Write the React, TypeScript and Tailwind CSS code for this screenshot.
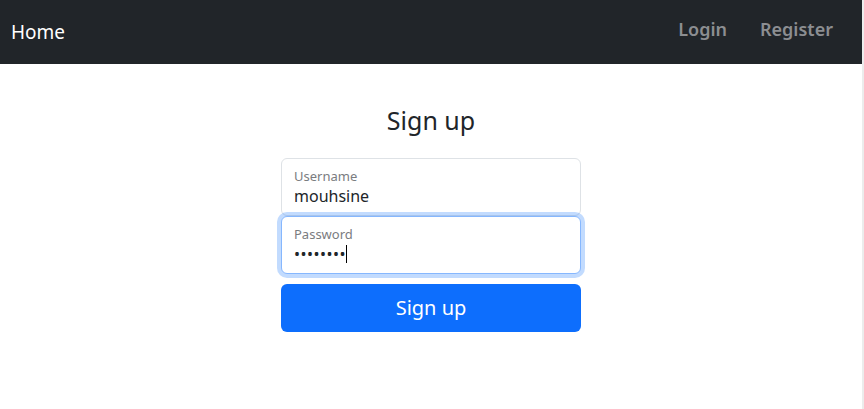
import { useState } from "react"

const font = { fontFamily: '"Noto Sans", "Open Sans", sans-serif' }

function Navbar() {
  return (
    <nav className="flex h-16 items-stretch justify-between bg-[#212529] pl-[11px] pr-[29px]">
      <a className="flex items-center pt-[1px] text-[19px] text-white">Home</a>
      <div className="flex items-center gap-[33px] pb-[6px] text-[18px] font-semibold text-[#8c8e91]">
        <a>Login</a>
        <a>Register</a>
      </div>
    </nav>
  )
}

function FloatingInput({
  label,
  value,
  focused,
  type = "text",
}: {
  label: string
  value: string
  focused?: boolean
  type?: string
}) {
  return (
    <div
      className={
        focused
          ? "relative h-[58px] rounded-[6px] border border-[#86b7fe] bg-white shadow-[0_0_0_4px_rgba(13,110,253,0.25)]"
          : "relative h-[58px] rounded-[6px] border border-[#dee2e6] bg-white"
      }
    >
      <div className="px-[12px] pt-[8px] text-[13px] leading-[18px] text-[#7a7c7f]">{label}</div>
      <div className="flex items-center px-[12px] text-[16px] leading-[22px] text-[#212529]">
        {type === "password" ? (
          <>
            <span className="text-[16px] tracking-[0.5px]">{"•".repeat(value.length)}</span>
            <span className="inline-block h-[18px] w-[1px] bg-black" />
          </>
        ) : (
          value
        )}
      </div>
    </div>
  )
}

export default function App() {
  const [username] = useState("mouhsine")
  const [password] = useState("password")

  return (
    <div className="flex min-h-[409px] bg-white" style={font}>
      <div className="w-[862px]">
        <Navbar />
        <main className="flex flex-col items-center pt-[41px]">
          <h3 className="text-[25px] leading-[31px] text-[#212529]">Sign up</h3>
          <form className="mt-[22px] flex w-[300px] flex-col">
            <FloatingInput label="Username" value={username} />
            <FloatingInput label="Password" value={password} type="password" focused />
            <button
              type="button"
              className="mt-[10px] h-[48px] rounded-[6px] bg-[#0d6efd] text-[20px] text-white"
            >
              Sign up
            </button>
          </form>
        </main>
      </div>
      <div className="w-[2px] bg-[#ececec]" />
    </div>
  )
}
